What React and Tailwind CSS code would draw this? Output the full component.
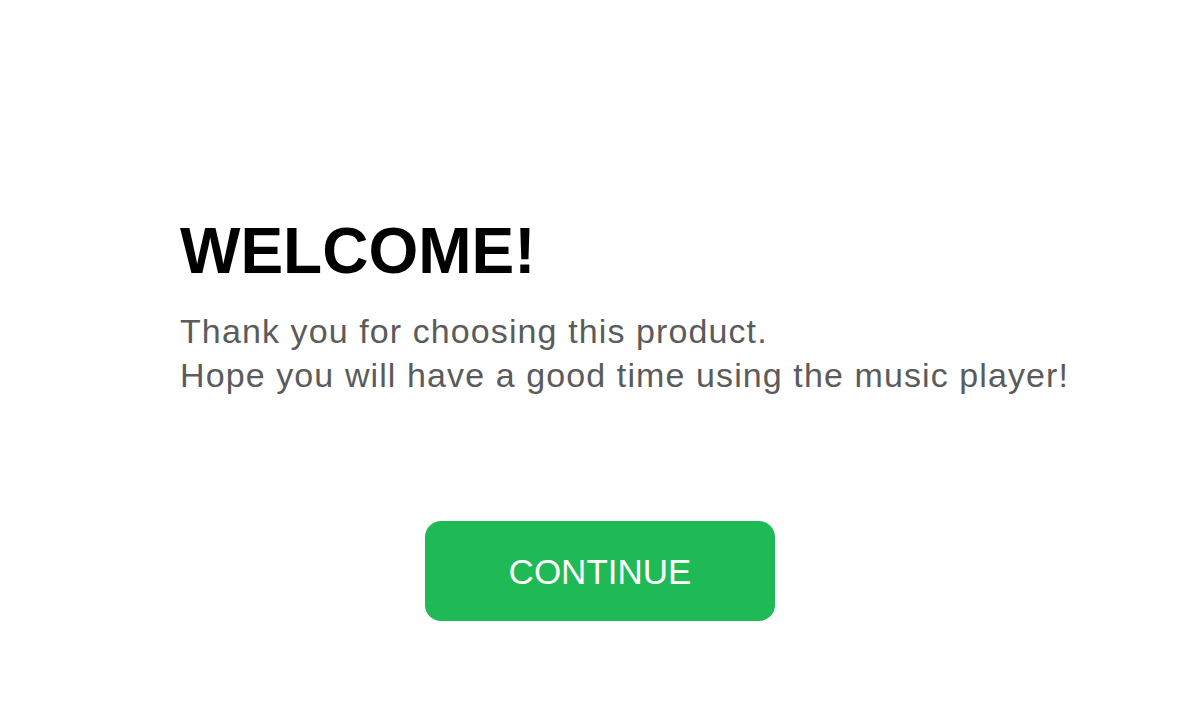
import React from 'react';

export default function App() {
  return (
    <div className="w-full h-[720px] bg-white flex flex-col px-[180px] pt-[219px] font-['Liberation_Sans',Arial,sans-serif]">
      {/* Greeting */}
      <h1 className="text-[64px] leading-none font-bold text-black">WELCOME!</h1>
      <p className="mt-[26px] text-[34px] leading-[44px] tracking-[1.1px] whitespace-nowrap text-[#5b5b5b]">
        Thank you for choosing this product.
        <br />
        Hope you will have a good time using the music player!
      </p>

      <button className="self-center mt-[124px] w-[350px] h-[100px] rounded-2xl bg-[#1fb955] text-white text-[35px] leading-none">
        CONTINUE
      </button>
    </div>
  );
}
